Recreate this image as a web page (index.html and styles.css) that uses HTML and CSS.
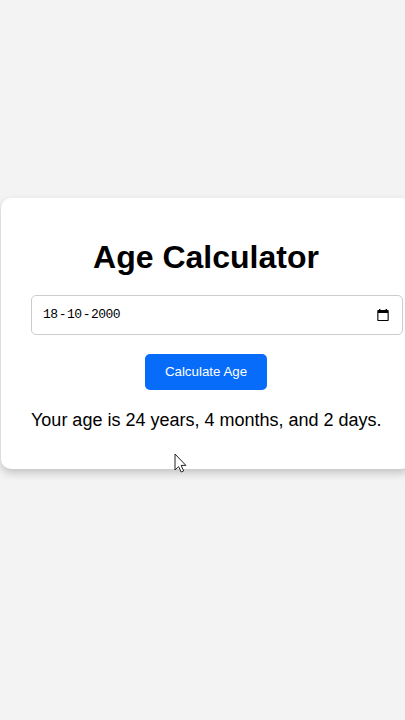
FILE: index.html
```
<!DOCTYPE html>
<html lang="en">
<head>
  <meta charset="UTF-8">
  <meta name="viewport" content="width=device-width, initial-scale=1.0">
  <title>Age Calculator</title>
  <link rel="stylesheet" href="styles.css">
</head>
<body>
  <div class="container">
    <h1>Age Calculator</h1>
    <div class="date-input">
      <div class="date-value">
        <span>18</span><span class="sep">-</span><span>10</span><span class="sep">-</span><span>2000</span>
      </div>
      <svg class="calendar" viewBox="0 0 12 13" xmlns="http://www.w3.org/2000/svg">
        <path fill-rule="evenodd" d="M2 0h1.4v1h5.2V0H10v1h.9a.8.8 0 0 1 .8.8v9.4a.8.8 0 0 1-.8.8H1.1a.8.8 0 0 1-.8-.8V1.8a.8.8 0 0 1 .8-.8H2zM1.4 4v7h9.2V4z"/>
      </svg>
    </div>
    <button type="button" class="btn">Calculate Age</button>
    <p class="result">Your age is 24 years, 4 months, and 2 days.</p>
  </div>
  <svg class="cursor" viewBox="0 0 13 20" xmlns="http://www.w3.org/2000/svg">
    <path d="M1 1v16l3.6-3.4 2.6 5.4 2.5-1.1-2.6-5.5h4.8z"/>
  </svg>
</body>
</html>
```

FILE: styles.css
```
body {
  font-family: "Liberation Sans", Arial, sans-serif;
  background-color: #f3f3f3;
  color: #000;
  margin: 0;
  height: 720px;
  overflow: hidden;
}

.container {
  box-sizing: border-box;
  width: 410px;
  height: 271px;
  margin: 198px 0 0 1px;
  padding: 30px;
  background-color: #fff;
  border-radius: 10px;
  box-shadow: 0 4px 8px rgba(0, 0, 0, 0.2);
  text-align: center;
}

h1 {
  margin: 10px 0 19px;
  font-size: 32px;
  line-height: 38px;
  white-space: nowrap;
}

.date-input {
  display: flex;
  align-items: center;
  justify-content: space-between;
  width: 350px;
  height: 18px;
  padding: 10px;
  border: 1px solid #ccc;
  border-radius: 5px;
}

.date-value {
  display: flex;
  padding-left: 1px;
  font-family: Consolas, "Liberation Mono", monospace;
  font-size: 13px;
  letter-spacing: -0.55px;
  line-height: 18px;
}

.sep {
  width: 9.5px;
  text-align: center;
}

.calendar {
  width: 12px;
  height: 13px;
  margin-right: 3px;
}

.btn {
  display: block;
  width: 122px;
  height: 36px;
  margin: 19px auto 0;
  padding: 0 0 2px;
  border: none;
  border-radius: 5px;
  background-color: #076cf9;
  color: #fff;
  font-family: inherit;
  font-size: 13.33px;
  cursor: pointer;
}

.result {
  margin: 20px 0 0;
  font-size: 18px;
  line-height: 21px;
  text-align: left;
  white-space: nowrap;
}

/* pointer drawn over the card */
.cursor {
  position: absolute;
  left: 174px;
  top: 453px;
  width: 13px;
  height: 20px;
  fill: #fff;
  stroke: #222;
  stroke-width: 1;
}
```
